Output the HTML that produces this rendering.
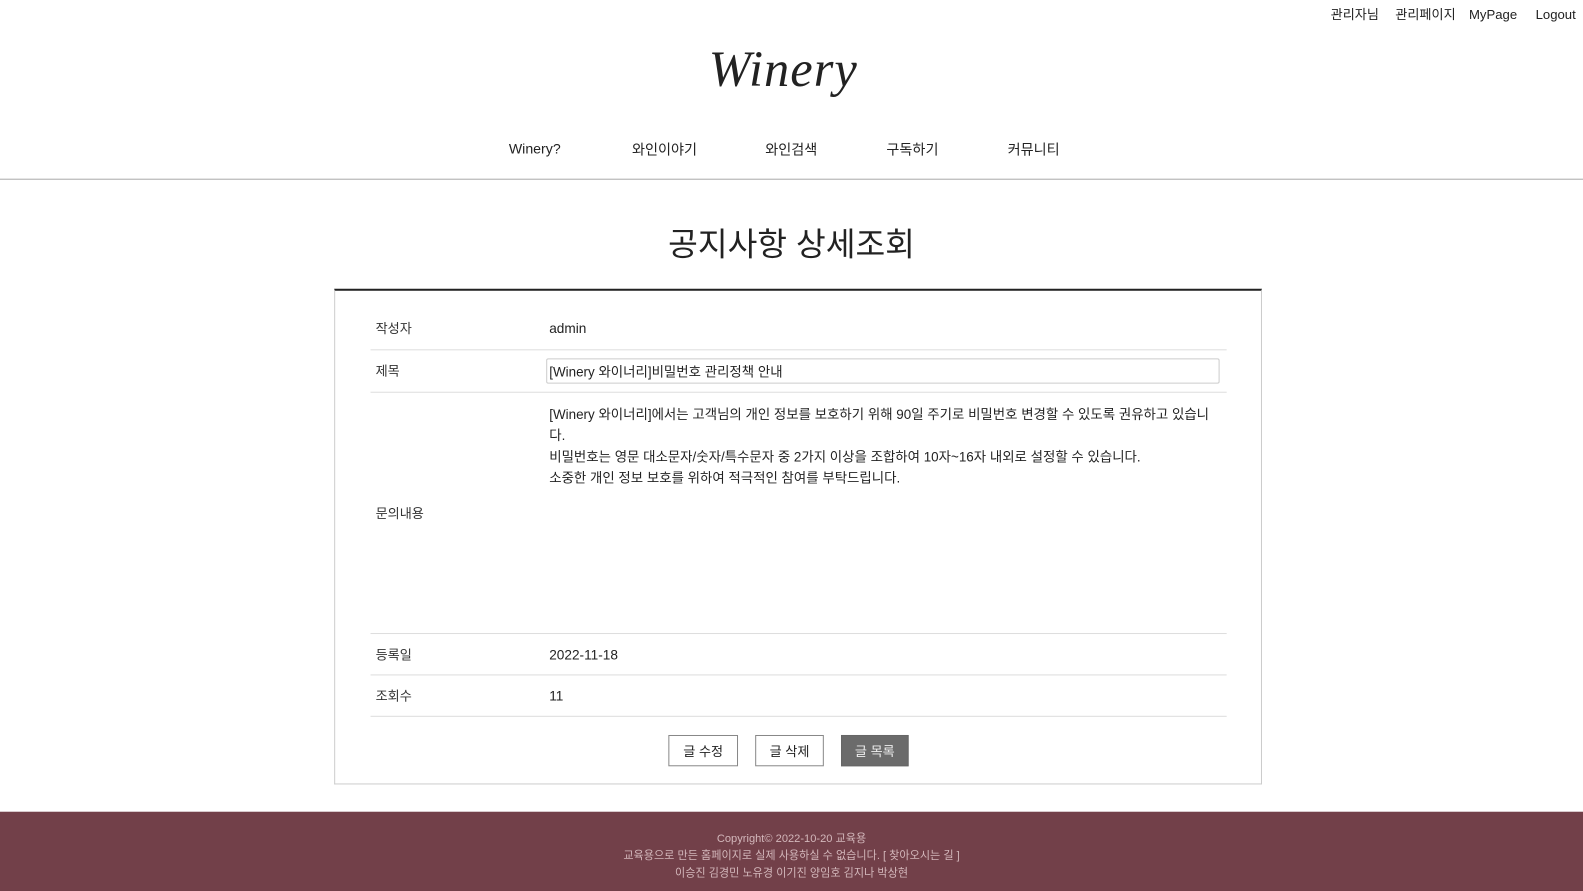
<!DOCTYPE html>
<html><head><meta charset="utf-8"><style>
*{margin:0;padding:0;box-sizing:border-box}
body{width:1583px;height:883px;overflow:hidden;background:#fff;font-family:"Liberation Sans","Noto Sans CJK KR",sans-serif;color:#222;position:relative}
#w{position:absolute;left:0;top:0;width:1568px;height:875px;transform:scale(1.0096);transform-origin:0 0}
.a{position:absolute;white-space:nowrap;line-height:1.2}
.top{top:7px;font-size:13px}
.nav{top:140px;font-size:14px}
.lbl{left:372px;font-size:13px;color:#333}
.val{left:544px;font-size:13.5px;color:#222}
.hr{position:absolute;left:367px;width:848px;height:1px;background:#ddd}
.btn{position:absolute;top:728px;height:31px;border:1px solid #888;font-size:13px;display:flex;align-items:center;justify-content:center}
.ft{left:0;text-align:center;font-size:11px;color:#d3b7bb}
</style></head><body><div id="w">
<div class="a top" style="left:1318px">관리자님</div>
<div class="a top" style="left:1382px">관리페이지</div>
<div class="a top" style="left:1455px;top:7px">MyPage</div>
<div class="a top" style="left:1521px;top:7px">Logout</div>
<div class="a" style="left:702px;top:38px;font-family:'Liberation Serif',serif;font-style:italic;font-size:50px;letter-spacing:1px">Winery</div>
<div class="a nav" style="left:504px;top:139px">Winery?</div>
<div class="a nav" style="left:626px">와인이야기</div>
<div class="a nav" style="left:758px">와인검색</div>
<div class="a nav" style="left:878px">구독하기</div>
<div class="a nav" style="left:998px">커뮤니티</div>
<div style="position:absolute;left:0;top:177px;width:1583px;height:1px;background:#aaa"></div>
<div class="a" style="left:0;width:1568px;text-align:center;top:223px;font-size:32px;color:#222">공지사항 상세조회</div>
<div style="position:absolute;left:331px;top:286px;width:919px;height:491px;border:1px solid #ccc;border-top:2px solid #222"></div>
<div class="a lbl" style="top:318px">작성자</div><div class="a val" style="top:318px">admin</div>
<div class="hr" style="top:346px"></div>
<div class="a lbl" style="top:360px">제목</div>
<div style="position:absolute;left:541px;top:355px;width:667px;height:25px;border:1px solid #ccc;border-radius:2px;font-size:13.3px;padding:2px 2px">[Winery 와이너리]비밀번호 관리정책 안내</div>
<div class="hr" style="top:388px"></div>
<div class="a val" style="top:400px;line-height:21px;font-size:13.3px">[Winery 와이너리]에서는 고객님의 개인 정보를 보호하기 위해 90일 주기로 비밀번호 변경할 수 있도록 권유하고 있습니<br>다.<br>비밀번호는 영문 대소문자/숫자/특수문자 중 2가지 이상을 조합하여 10자~16자 내외로 설정할 수 있습니다.<br>소중한 개인 정보 보호를 위하여 적극적인 참여를 부탁드립니다.</div>
<div class="a lbl" style="top:501px">문의내용</div>
<div class="hr" style="top:627px"></div>
<div class="a lbl" style="top:641px">등록일</div><div class="a val" style="top:641px">2022-11-18</div>
<div class="hr" style="top:668px"></div>
<div class="a lbl" style="top:682px">조회수</div><div class="a val" style="top:682px">11</div>
<div class="hr" style="top:709px"></div>
<div class="btn" style="left:662px;width:69px">글 수정</div>
<div class="btn" style="left:748px;width:68px">글 삭제</div>
<div class="btn" style="left:833px;width:67px;background:#6b6b6b;color:#eee;border-color:#666">글 목록</div>
<div style="position:absolute;left:0;top:804px;width:1583px;height:79px;background:#724049"></div>
<div class="a ft" style="top:825px;width:1568px">Copyright© 2022-10-20 교육용</div>
<div class="a ft" style="top:842px;width:1568px">교육용으로 만든 홈페이지로 실제 사용하실 수 없습니다. [ 찾아오시는 길 ]</div>
<div class="a ft" style="top:859px;width:1568px">이승진 김경민 노유경 이기진 양임호 김지나 박상현</div>
</div></body></html>
